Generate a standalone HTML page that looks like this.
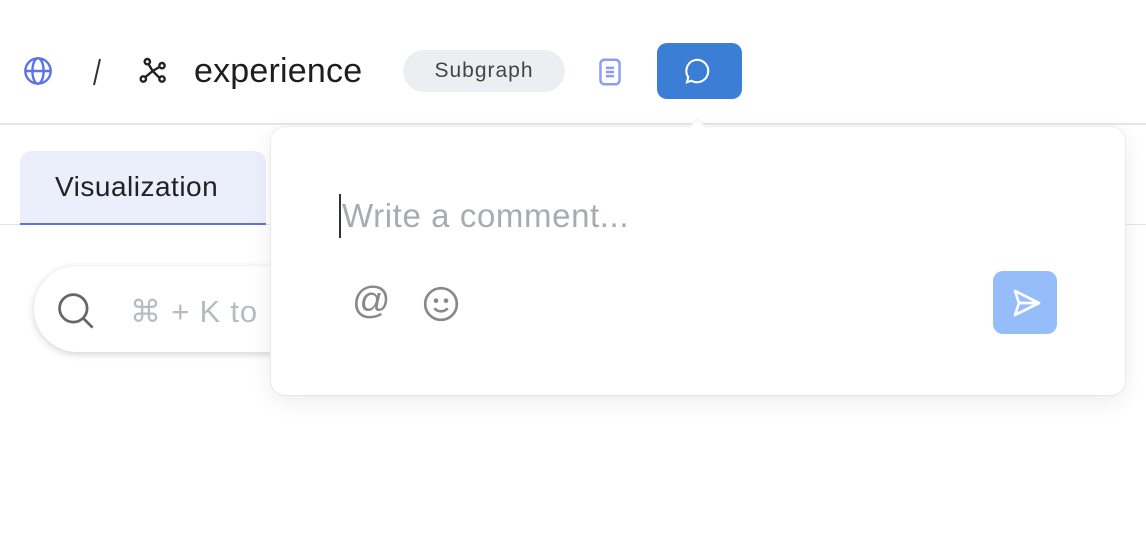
<!DOCTYPE html>
<html><head><style>
body{margin:0;width:1146px;height:536px;background:#fff;font-family:"Liberation Sans",sans-serif;position:relative;overflow:hidden}
.abs{position:absolute;white-space:nowrap}
</style></head><body>
<div class="abs" style="left:0;top:123px;width:1146px;height:2px;background:#e3e6ea"></div>
<svg class="abs" style="left:22px;top:55px" width="32" height="32" viewBox="0 0 24 24" fill="none" stroke="#5b72e8" stroke-width="1.8"><circle cx="12" cy="12" r="9.5"/><ellipse cx="12" cy="12" rx="4.2" ry="9.5"/><path d="M2.5 12h19"/></svg>
<svg class="abs" style="left:90px;top:56px" width="14" height="32" viewBox="0 0 14 32"><path d="M10 3L4 29" stroke="#333" stroke-width="2"/></svg>
<svg class="abs" style="left:138px;top:55px" width="32" height="32" viewBox="0 0 24 24" fill="none" stroke="#222" stroke-width="1.8"><circle cx="7" cy="5" r="2"/><circle cx="18" cy="8" r="2"/><circle cx="4" cy="18" r="2"/><circle cx="18" cy="18" r="2"/><path d="M8 7l3 5M16 9l-5 3M11 12l-6 5M11 12l5 5"/></svg>
<div class="abs" style="left:194px;top:52px;font-size:34px;letter-spacing:0.2px;color:#1e1e1e">experience</div>
<div class="abs" style="left:403px;top:50px;width:162px;height:42px;border-radius:21px;background:#eceef1;font-size:21px;letter-spacing:1px;color:#444;text-align:center;line-height:42px">Subgraph</div>
<svg class="abs" style="left:596px;top:57px" width="28" height="30" viewBox="0 0 20 22" fill="none" stroke="#8c9cf5" stroke-width="1.8"><rect x="3" y="2" width="14" height="18" rx="3"/><path d="M7 8h6M7 11h6M7 14h6"/></svg>
<div class="abs" style="left:657px;top:43px;width:85px;height:56px;border-radius:10px;background:#3c7ed6"></div>
<svg class="abs" style="left:682px;top:56px" width="30" height="30" viewBox="0 0 24 24" fill="none" stroke="#fff" stroke-width="1.7"><path d="M12 3a9 9 0 1 1-4.5 16.8L4 21l1-4A9 9 0 0 1 12 3z"/></svg>
<div class="abs" style="left:20px;top:151px;width:246px;height:73px;border-radius:12px 12px 0 0;background:#ebeefb"></div>
<div class="abs" style="left:0;top:224px;width:1146px;height:1px;background:#e3e6ea"></div>
<div class="abs" style="left:20px;top:223px;width:246px;height:2px;background:#5b72e8"></div>
<div class="abs" style="left:55px;top:171px;font-size:28px;letter-spacing:0.5px;color:#222">Visualization</div>
<div class="abs" style="left:34px;top:266px;width:400px;height:86px;border-radius:43px;background:#fff;box-shadow:0 2px 8px rgba(0,0,0,.18)"></div>
<svg class="abs" style="left:55px;top:290px" width="44" height="44" viewBox="0 0 24 24" fill="none" stroke="#666" stroke-width="1.5"><circle cx="10" cy="10" r="7.5"/><path d="M15.5 15.5l5 5"/></svg>
<div class="abs" style="left:130px;top:294px;font-size:31px;letter-spacing:0.8px;color:#b8bcc2">⌘ + K to</div>
<div class="abs" style="left:271px;top:127px;width:854px;height:268px;border-radius:14px;background:#fff;box-shadow:0 6px 24px rgba(0,0,0,.08),0 0 0 1px #f0f1f3"></div>
<div class="abs" style="left:691px;top:121px;width:12px;height:12px;background:#fff;transform:rotate(45deg);border-left:1px solid #eef0f2;border-top:1px solid #eef0f2"></div>
<div class="abs" style="left:339px;top:194px;width:2px;height:44px;background:#333"></div>
<div class="abs" style="left:342px;top:197px;font-size:33px;letter-spacing:0.6px;color:#a8acb2">Write a comment...</div>
<div class="abs" style="left:352px;top:280px;font-size:38px;color:#888">@</div>
<svg class="abs" style="left:421px;top:284px" width="40" height="40" viewBox="0 0 24 24" fill="none" stroke="#888" stroke-width="1.6"><circle cx="12" cy="12" r="9.5"/><circle cx="9" cy="10" r=".6" fill="#888"/><circle cx="15" cy="10" r=".6" fill="#888"/><path d="M8 14.5c2 2.5 6 2.5 8 0"/></svg>
<div class="abs" style="left:993px;top:271px;width:64px;height:63px;border-radius:10px;background:#94bdfa"></div>
<svg class="abs" style="left:1010px;top:287px" width="34" height="32" viewBox="0 0 24 24" fill="none" stroke="#fff" stroke-width="2" stroke-linejoin="round"><path d="M3 3l18 9-18 9 3-9z M6 12h15"/></svg>
</body></html>
